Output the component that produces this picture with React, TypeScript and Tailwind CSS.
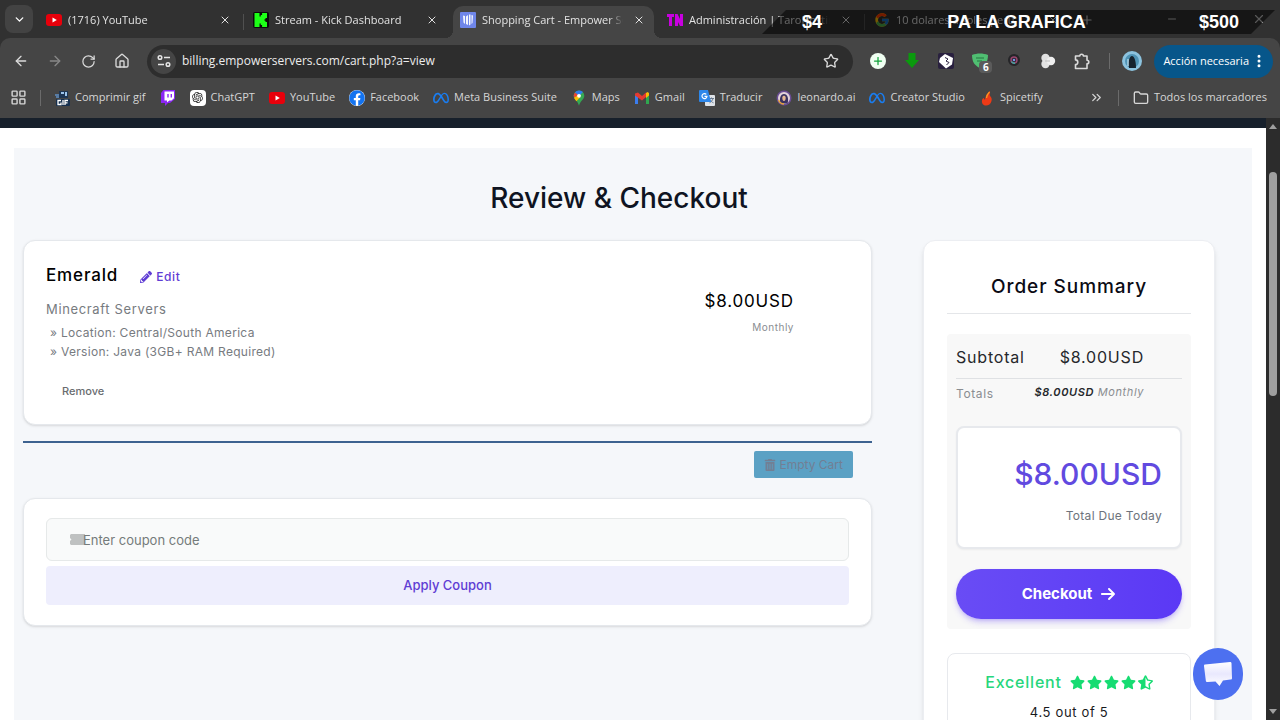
import { type ReactNode } from "react";
import {
  ArrowLeft,
  ArrowRight,
  ChevronDown,
  ChevronsRight,
  EllipsisVertical,
  Folder,
  House,
  LayoutGrid,
  Minus,
  Plus,
  RotateCw,
  Star,
  X,
} from "lucide-react";
import { FaFacebook, FaPencilAlt, FaStar, FaStarHalfAlt, FaTrashAlt } from "react-icons/fa";
import { FaArrowRight, FaMeta } from "react-icons/fa6";
import { FcGoogle } from "react-icons/fc";
import { RiOpenaiFill } from "react-icons/ri";

/* ===== Favicons ===== */

function YouTubeIcon() {
  return (
    <svg viewBox="0 0 16 16" className="size-4 shrink-0">
      <rect x="0" y="2" width="16" height="12" rx="3" fill="#e8000b" />
      <path d="M6.5 5.5v5L10.8 8z" fill="#fff" />
    </svg>
  );
}

function KickIcon() {
  return (
    <svg viewBox="0 0 16 16" className="size-4 shrink-0">
      <rect width="16" height="16" rx="2" fill="#0b0b0b" />
      <path d="M1.500 1h5v3.500h1.300V3h1.300V1H14v5h-1.500v1.300h-1v1.400h1V10H14v5H9.100v-2H7.800v-1.500H6.500V15h-5z" fill="#1dff17" />
    </svg>
  );
}

function EmpowerIcon() {
  return (
    <svg viewBox="0 0 16 16" className="size-4 shrink-0">
      <rect width="16" height="16" rx="1" fill="#6f86ea" />
      <path d="M3 3.500 5 4v8l-1.500-1.500zM6 4.500 8 3v10l-2-1zM9 2.500h1.500v10L9 13.500zM11.500 3l1.500.5L12.500 11l-1 1z" fill="#f3f6ff" />
    </svg>
  );
}

function TaroIcon() {
  return (
    <svg viewBox="0 0 16 16" className="size-4 shrink-0">
      <path d="M0 2h7v3H5v9H2V5H0zM8 2h2.500L13 7V2h3v12h-3l-2-4v4H8z" fill="#c800e0" />
    </svg>
  );
}

function GifIcon() {
  return (
    <svg viewBox="0 0 16 16" className="size-4 shrink-0">
      <path d="M5 1h9v7H5z" fill="#1d3553" />
      <path d="M7 2h3v2H7zM11 2h2v4h-2z" fill="#9cc3ea" />
      <path d="M1 5h4M2 7h3" stroke="#5f8fc4" strokeWidth="1.500" />
      <rect x="2" y="9" width="14" height="7" rx="1" fill="#16304f" />
      <path d="M7 10.500H4v4h3v-2M9 10v5M14 10.500h-3V15M11 12.800h2.500" stroke="#fff" strokeWidth="1.300" fill="none" />
    </svg>
  );
}

function TwitchIcon() {
  return (
    <svg viewBox="0 0 16 16" className="size-4 shrink-0">
      <path d="M3.500 0H15v9l-5 4H8l-3 3v-3H1V3z" fill="#8b25f5" />
      <path d="M4.500 1.500H14v6.700l-2.500 2.300H9.300L7 12.500v-2H4.500z" fill="#fff" />
      <path d="M8 4v3.500M11.300 4v3.500" stroke="#8b25f5" strokeWidth="1.400" />
    </svg>
  );
}

function MapsIcon() {
  return (
    <svg viewBox="0 0 16 16" className="size-4 shrink-0">
      <path d="M8 .5a5.300 5.300 0 0 1 5.300 5.300c0 3.600-4 5-5.300 10-1.300-5-5.300-6.400-5.300-10A5.300 5.300 0 0 1 8 .5z" fill="#35a853" />
      <path d="M8 .5a5.300 5.300 0 0 0-4.100 2L8 6l4-4A5.300 5.300 0 0 0 8 .5z" fill="#2f7df0" />
      <path d="M3.900 2.500A5.300 5.300 0 0 0 3 7.700L7.500 5.300z" fill="#e94335" />
      <path d="M3 7.700c.5 1.200 1.500 2.200 2.400 3.500L9.500 7 7 5.300z" fill="#fbbc04" />
      <circle cx="8" cy="5.800" r="1.900" fill="#fff" />
    </svg>
  );
}

function GmailIcon() {
  return (
    <svg viewBox="0 0 16 16" className="size-4 shrink-0">
      <path d="M1 4v10h3V7z" fill="#3b7ded" />
      <path d="M15 4v10h-3V7z" fill="#2fa84f" />
      <path d="M1 3.500 4 2.500l4 3.500 4-3.500v4.500L8 10.500 1 5.500z" fill="#e53a30" />
      <path d="M12 3l1.500-1L15 3v2.500L12 8z" fill="#fbbc04" />
    </svg>
  );
}

function TranslateIcon() {
  return (
    <svg viewBox="0 0 16 16" className="size-4 shrink-0">
      <rect x="6" y="5" width="10" height="11" rx="1" fill="#dfe3e8" />
      <path d="M10 8.500h5M12.500 7.500v1M14 8.500c-.5 2-2 3.500-3.500 4.300M11 9.500c.7 1.600 2 2.800 3.500 3.300" stroke="#69798c" fill="none" />
      <path d="M1 0h8l3 12H1a1 1 0 0 1-1-1V1a1 1 0 0 1 1-1z" fill="#2d87ea" />
      <path d="M7.300 4.300A2.500 2.500 0 1 0 8 6.300H5.500" stroke="#fff" strokeWidth="1.200" fill="none" />
    </svg>
  );
}

function LeonardoIcon() {
  return (
    <svg viewBox="0 0 16 16" className="size-4 shrink-0">
      <circle cx="8" cy="8" r="7.500" fill="#6b4d95" />
      <circle cx="8" cy="8" r="6" fill="#e3d3da" />
      <path d="M4.500 13.500c-1.500-4.500 0-9.500 3.500-9.500s5 5 3.500 9.500z" fill="#3a3260" />
      <path d="M6.300 7.500c0-2.300 3.400-2.300 3.400 0s-.5 3.500-1.700 3.500-1.700-1.200-1.700-3.500z" fill="#e6b893" />
      <path d="M2.500 10c1 2.500 3 4 5.500 4" stroke="#e5a23c" strokeWidth="1.500" fill="none" />
    </svg>
  );
}

function SpicetifyIcon() {
  return (
    <svg viewBox="0 0 16 16" className="size-4 shrink-0">
      <path d="M11 1c.5 2-1 3 0 5 1.500 1 2 3 1.500 5-.7 3-3 4.500-5.500 4.500S2.500 13.500 3 10.500c.2-1.500 1-2.500 2-2.500 0 1 .5 1.500 1 1.500C6.500 6 8 3 11 1z" fill="#ee3a16" />
      <path d="M10.500 2C8.500 4 7.500 6 7.500 8" stroke="#f59a23" strokeWidth="1.200" fill="none" />
    </svg>
  );
}

/* ===== Browser chrome ===== */

const tabs: { title: string; icon: ReactNode; active?: boolean; divider?: boolean }[] = [
  { title: "(1716) YouTube", icon: <YouTubeIcon />, divider: true },
  { title: "Stream - Kick Dashboard", icon: <KickIcon /> },
  { title: "Shopping Cart - Empower Servers", icon: <EmpowerIcon />, active: true },
  { title: "Administración | TaroHosting", icon: <TaroIcon />, divider: true },
  { title: "10 dolares a soles peru", icon: <FcGoogle className="size-4 shrink-0" /> },
];

const bookmarks: { label: string; icon: ReactNode }[] = [
  { label: "Comprimir gif", icon: <GifIcon /> },
  { label: "", icon: <TwitchIcon /> },
  {
    label: "ChatGPT",
    icon: (
      <span className="flex size-4 shrink-0 items-center justify-center rounded-sm bg-white text-[#222]">
        <RiOpenaiFill size={13} />
      </span>
    ),
  },
  { label: "YouTube", icon: <YouTubeIcon /> },
  {
    label: "Facebook",
    icon: (
      <span className="flex size-4 shrink-0 rounded-full bg-white">
        <FaFacebook size={16} color="#1373f0" />
      </span>
    ),
  },
  { label: "Meta Business Suite", icon: <FaMeta size={16} color="#1a7df0" className="shrink-0" /> },
  { label: "Maps", icon: <MapsIcon /> },
  { label: "Gmail", icon: <GmailIcon /> },
  { label: "Traducir", icon: <TranslateIcon /> },
  { label: "leonardo.ai", icon: <LeonardoIcon /> },
  { label: "Creator Studio", icon: <FaMeta size={16} color="#1a7df0" className="shrink-0" /> },
  { label: "Spicetify", icon: <SpicetifyIcon /> },
];

/** Raised background of the selected tab, with the flared feet */
function ActiveTabShape() {
  return (
    <>
      <span className="absolute inset-y-0 right-1 left-[2px] rounded-t-[10px] bg-[#454545]" />
      <span className="absolute bottom-0 -left-[6px] size-2 bg-[radial-gradient(circle_at_0_0,transparent_8px,#454545_8px)]" />
      <span className="absolute -right-1 bottom-0 size-2 bg-[radial-gradient(circle_at_100%_0,transparent_8px,#454545_8px)]" />
    </>
  );
}

function TabStrip() {
  return (
    <div className="relative flex h-[38px] items-end bg-[#313131] pl-[5px]">
      <button type="button" aria-label="Buscar pestañas" className="mb-[5px] flex size-7 shrink-0 items-center justify-center rounded-lg bg-[#434343] text-white">
        <ChevronDown size={13} strokeWidth={2.5} />
      </button>
      <div role="tablist" className="ml-1 flex min-w-0 flex-1">
        {tabs.map((tab) => (
          <div key={tab.title} className="relative flex h-8 min-w-0 max-w-[207px] flex-1 items-center px-[9px]">
            {tab.active && <ActiveTabShape />}
            <div className="relative flex min-w-0 flex-1 items-center pb-1">
              {tab.icon}
              <button
                type="button"
                role="tab"
                aria-selected={!!tab.active}
                className="ml-[6px] h-5 min-w-0 flex-1 overflow-hidden mask-r-from-90% text-left text-[11px] whitespace-nowrap text-[#e2e2e2]"
              >
                {tab.title}
              </button>
              <button type="button" aria-label="Cerrar pestaña" className="mr-[2px] ml-2 flex size-4 shrink-0 items-center justify-center text-[#e2e2e2]">
                <X size={12} />
              </button>
            </div>
            {tab.divider && <span className="absolute top-2 right-0 h-4 w-px bg-[#505050]" />}
          </div>
        ))}
        <button type="button" aria-label="Nueva pestaña" className="mb-1 ml-2 text-[#d0d0d0]">
          <Plus size={14} />
        </button>
      </div>
      <div className="flex h-full items-center gap-[74px] pr-[14px] text-[#c4c4c4]">
        <Minus size={12} />
        <X size={14} />
      </div>
      {/* donation goal ribbon, drawn over the tabs */}
      <div className="absolute top-[10px] right-[5px] left-[762px] flex h-6 items-center justify-between bg-black/55 pr-9 pl-10 font-['Liberation_Sans',Arial,sans-serif] text-lg leading-6 font-bold text-white [clip-path:polygon(24px_0,100%_0,calc(100%-24px)_100%,0_100%)]">
        <span>$4</span>
        <span className="pl-3">PA LA GRAFICA</span>
        <span>$500</span>
      </div>
    </div>
  );
}

function Extensions() {
  return (
    <div className="flex shrink-0 items-center gap-[18px] text-[#dadada]">
      <button type="button" aria-label="Añadir" className="flex size-4 items-center justify-center rounded-full bg-[#f0fff2] text-[#12a33b]">
        <Plus size={12} strokeWidth={2.5} />
      </button>
      <button type="button" aria-label="Descargar">
        <svg viewBox="0 0 16 16" className="size-4">
          <path d="M4.500 0h7v7H15l-7 8-7-8h3.500z" fill="#0a9a0d" />
        </svg>
      </button>
      <button type="button" aria-label="Extensión">
        <svg viewBox="0 0 16 16" className="size-4">
          <rect width="16" height="16" rx="2" fill="#29203f" />
          <path d="M7 1 15 5l-1 6.500L8 15.500 1 9l1-4z" fill="#fff" />
          <path d="m7 4.500 3 1.500-2 2 3 1.500L8.500 12" stroke="#29203f" fill="none" />
        </svg>
      </button>
      <button type="button" aria-label="Escudo, 6" className="relative">
        <svg viewBox="0 0 16 16" className="size-4">
          <path d="M0 2c5-2 11-2 16 0 0 7-3 11-8 13C3 13 0 9 0 2z" fill="#50bf72" />
          <path d="M4 5h8M5 8h5" stroke="#338e51" strokeWidth="1.500" />
        </svg>
        <span className="absolute top-2 left-[7px] flex h-3 w-[13px] items-center justify-center rounded-sm bg-[#5b5b5b] text-[10px] font-bold text-white">6</span>
      </button>
      <button type="button" aria-label="Cámara">
        <svg viewBox="0 0 16 16" className="size-4">
          <circle cx="8" cy="7" r="6" fill="#252528" />
          <circle cx="8" cy="7" r="3" fill="none" stroke="#9a4670" strokeWidth="1.500" />
          <path d="M5.500 8.500A3 3 0 0 0 9 10" stroke="#3aa9a0" strokeWidth="1.500" fill="none" />
          <circle cx="8" cy="7" r="1.300" fill="#7792e8" />
        </svg>
      </button>
      <button type="button" aria-label="Extensión">
        <svg viewBox="0 0 16 16" className="size-4">
          <circle cx="5.500" cy="5" r="4.200" fill="#e2e2e2" />
          <circle cx="5.500" cy="11" r="4.200" fill="#e2e2e2" />
          <circle cx="11" cy="8" r="4.200" fill="#efefef" />
          <path d="M3 5h4v6H3z" fill="#e2e2e2" />
          <path d="M5 8h5" stroke="#bbb" />
        </svg>
      </button>
      <button type="button" aria-label="Extensiones">
        <svg viewBox="0 0 17 17" className="size-[17px]" fill="none" stroke="#dadada" strokeWidth="1.600" strokeLinejoin="round">
          <path d="M1.500 3h4.300a1.800 1.800 0 0 1 3.600 0H13v4.200a1.800 1.800 0 0 1 0 3.600V15.500H1.500v-4a2.300 2.300 0 0 0 0-4.600z" />
        </svg>
      </button>
      <span className="-mr-[2px] h-4 w-px bg-[#6b6b6b]" />
      <button type="button" aria-label="Perfil" className="-ml-1">
        <svg viewBox="0 0 20 20" className="size-5">
          <circle cx="10" cy="10" r="10" fill="#8cc3df" />
          <circle cx="10" cy="10" r="7" fill="#4f93b5" />
          <path d="M7 17c-1-5 0-12 3-12 2 0 4 4 4 12z" fill="#16232e" />
          <path d="M6 8v7" stroke="#dceef7" />
        </svg>
      </button>
    </div>
  );
}

function Toolbar() {
  return (
    <div className="bg-[#313131]">
      <div className="flex h-[46px] items-center rounded-t-[10px] bg-[#454545] pr-[7px] pl-[13px] text-[#dadada]">
        <div className="flex shrink-0 items-center gap-[18px]">
          <button type="button" aria-label="Atrás"><ArrowLeft size={16} /></button>
          <button type="button" aria-label="Adelante" className="text-[#888]"><ArrowRight size={16} /></button>
          <button type="button" aria-label="Recargar"><RotateCw size={15} /></button>
          <button type="button" aria-label="Inicio"><House size={16} /></button>
        </div>
        <div className="ml-[17px] flex h-[33px] min-w-0 flex-1 items-center rounded-full bg-[#2d2d2d] pr-[14px] pl-1">
          <button type="button" aria-label="Información del sitio" className="flex size-[25px] shrink-0 items-center justify-center rounded-full bg-[#454545]">
            <svg viewBox="0 0 16 16" className="size-4" fill="none" stroke="#e6e6e6" strokeWidth="1.500">
              <circle cx="4" cy="4.500" r="1.800" />
              <path d="M8 4.500h6M2 11.500h6" />
              <circle cx="12" cy="11.500" r="1.800" />
            </svg>
          </button>
          <input
            aria-label="Dirección"
            readOnly
            defaultValue="billing.empowerservers.com/cart.php?a=view"
            className="ml-[6px] min-w-0 flex-1 bg-transparent text-xs text-[#ececec] outline-none"
          />
          <button type="button" aria-label="Añadir a marcadores"><Star size={16} /></button>
        </div>
        <div className="ml-[17px]">
          <Extensions />
        </div>
        <button type="button" className="ml-3 flex h-[33px] shrink-0 items-center gap-[2px] rounded-full bg-[#07568a] pr-[6px] pl-[9px] text-[11px] text-white">
          Acción necesaria
          <EllipsisVertical size={16} strokeWidth={2.5} />
        </button>
      </div>
    </div>
  );
}

function BookmarksBar() {
  return (
    <div className="flex h-[34px] items-center bg-[#454545] pr-[13px] pb-[7px] pl-[10px] text-[11px] text-[#d6d6d6]">
      <button type="button" aria-label="Grupos de pestañas"><LayoutGrid size={17} /></button>
      <span className="mx-[13px] h-4 w-px bg-[#6b6b6b]" />
      <nav className="flex min-w-0 flex-1 items-center gap-[14px] overflow-hidden">
        {bookmarks.map((item, i) => (
          <a key={i} href="#" aria-label={item.label || "Twitch"} className="flex shrink-0 items-center gap-[5px] whitespace-nowrap">
            {item.icon}
            {item.label}
          </a>
        ))}
      </nav>
      <button type="button" aria-label="Más marcadores"><ChevronsRight size={15} /></button>
      <span className="mx-[14px] h-4 w-px bg-[#6b6b6b]" />
      <button type="button" className="flex shrink-0 items-center gap-[5px] whitespace-nowrap">
        <Folder size={16} />
        Todos los marcadores
      </button>
    </div>
  );
}

/* ===== Cart page ===== */

function CartItem() {
  return (
    <section className="flex h-[185px] items-start justify-between rounded-xl border border-[#e5e8ec] bg-white pt-[22px] pr-[77px] pl-[22px] shadow-sm">
      <div>
        <div className="flex items-center gap-[22px]">
          <h2 className="text-[17px] leading-6 font-medium tracking-wider text-black">Emerald</h2>
          <a href="#" className="flex items-center gap-1 pt-1 text-xs font-medium tracking-wider text-[#5f3dd4]">
            <FaPencilAlt size={12} />
            Edit
          </a>
        </div>
        <p className="mt-3 text-[13px] leading-5 tracking-wider text-[#777b7f]">Minecraft Servers</p>
        <ul className="mt-1 pl-1 text-xs leading-[19px] tracking-wide text-[#777b7f]">
          <li>» Location: Central/South America</li>
          <li>» Version: Java (3GB+ RAM Required)</li>
        </ul>
        <button type="button" className="mt-5 ml-4 text-[11px] leading-5 font-medium text-[#686c70]">Remove</button>
      </div>
      <div className="pt-[26px] text-right">
        <p className="text-[17px] leading-6 tracking-wider text-black">$8.00USD</p>
        <p className="mt-[6px] text-[10px] leading-4 tracking-wider text-[#8a8d91]">Monthly</p>
      </div>
    </section>
  );
}

function CouponForm() {
  return (
    <form className="flex flex-col gap-[5px] rounded-xl border border-[#e5e8ec] bg-white px-[22px] pt-[19px] pb-5 shadow-sm" onSubmit={(e) => e.preventDefault()}>
      <div className="relative rounded-md bg-[#f9fafa]">
        <label htmlFor="coupon" className="sr-only">Coupon code</label>
        <svg viewBox="0 0 15 11" className="absolute top-4 left-6 h-[11px] w-[15px]">
          <path d="M1 0h14v11H1L0 10V7l1.500-1.500L0 4V1z" fill="#bfc1c1" />
        </svg>
        <input
          id="coupon"
          placeholder="Enter coupon code"
          className="relative block h-[43px] w-full rounded-md border border-[#e6e9e9] bg-transparent pl-9 text-[13px] text-[#555] outline-none placeholder:text-[#757b7b]"
        />
      </div>
      <button type="submit" className="h-[39px] rounded-sm bg-[#eeeefd] text-[13px] font-medium text-[#5f3dd4]">
        Apply Coupon
      </button>
    </form>
  );
}

function OrderSummary() {
  return (
    <aside className="w-[292px] shrink-0 rounded-xl border border-[#eceef2] bg-white px-[23px] pt-8 shadow-md">
      <h2 className="border-b border-[#e4e6e9] pb-3 text-center text-[19px] leading-7 font-medium tracking-wider text-[#0b0b14]">Order Summary</h2>
      <div className="mt-5 rounded-sm bg-[#f8f8f8] px-[9px] pt-[9px] pb-[10px]">
        <div className="flex justify-between border-b border-[#dfe1e4] pr-[38px] pb-[7px] text-base leading-7 tracking-wider text-[#26282c]">
          <span>Subtotal</span>
          <span>$8.00USD</span>
        </div>
        <div className="flex justify-between pt-[3px] pr-[38px] text-xs leading-5 tracking-wider text-[#8a8d91]">
          <span className="pt-[2px]">Totals</span>
          <span className="text-[11px] italic">
            <b className="font-semibold text-[#26282c]">$8.00USD</b> Monthly
          </span>
        </div>
        <div className="mt-[22px] rounded-lg border-2 border-[#e7e9ed] bg-white pt-6 pr-[18px] pb-[21px] text-right shadow-xs">
          <p className="text-3xl leading-[44px] font-medium text-[#614ae0]">$8.00USD</p>
          <p className="mt-[10px] text-xs leading-5 tracking-wide text-[#6d737c]">Total Due Today</p>
        </div>
        <button type="button" className="mt-5 flex h-[50px] w-full items-center justify-center gap-2 rounded-full bg-linear-to-r from-[#694cf5] to-[#5b38f5] text-[15px] font-bold text-white shadow-md shadow-[#694cf5]/30">
          Checkout
          <FaArrowRight size={16} />
        </button>
      </div>
      <div className="mt-6 rounded-lg border border-[#e7e9ed] pt-4 pb-10 text-center">
        <div className="flex items-center justify-center gap-2">
          <span className="text-base leading-6 font-medium tracking-wider text-[#27d67c]">Excellent</span>
          <span className="flex gap-[2px] text-[#16dc72]">
            <FaStar size={15} />
            <FaStar size={15} />
            <FaStar size={15} />
            <FaStar size={15} />
            <FaStarHalfAlt size={15} />
          </span>
        </div>
        <p className="mt-2 text-[13px] leading-5 tracking-wider text-[#18191c]">4.5 out of 5</p>
      </div>
    </aside>
  );
}

function Scrollbar() {
  return (
    <div className="flex w-[14px] shrink-0 flex-col items-center bg-[#2c2c2c] py-[6px]">
      <span className="border-x-4 border-b-[5px] border-x-transparent border-b-[#9f9f9f]" />
      <span className="mt-[43px] h-56 w-2 rounded-full bg-[#9f9f9f]" />
      <span className="mt-auto border-x-4 border-t-[5px] border-x-transparent border-t-[#9f9f9f]" />
    </div>
  );
}

export default function App() {
  return (
    <div className="flex h-screen flex-col overflow-hidden bg-white font-['Open_Sans','Noto_Sans',sans-serif]">
      <header className="shrink-0">
        <TabStrip />
        <Toolbar />
        <BookmarksBar />
      </header>
      <div className="flex min-h-0 flex-1">
        <div className="flex min-w-0 flex-1 flex-col overflow-hidden border-t-10 border-[#17202b] font-[Inter,sans-serif]">
          <main className="mx-[14px] mt-5 flex-1 bg-[#f5f7fa] pt-[30px] pr-[37px] pl-[9px]">
            <h1 className="text-center text-[28px] leading-10 font-medium text-[#0f1422]">Review &amp; Checkout</h1>
            <div className="mt-[22px] flex items-start gap-[51px]">
              <div className="min-w-0 flex-1">
                <CartItem />
                <div className="mt-4 flex justify-end border-t-2 border-[#3d6290] pt-2 pr-[19px] pb-5">
                  <button type="button" className="flex h-[27px] items-center gap-1 rounded-xs bg-[#5ba1c4] px-[10px] text-xs text-[#727f94]">
                    <FaTrashAlt size={12} />
                    Empty Cart
                  </button>
                </div>
                <CouponForm />
              </div>
              <OrderSummary />
            </div>
          </main>
        </div>
        <Scrollbar />
      </div>
      {/* chat launcher */}
      <button type="button" aria-label="Chat" className="fixed right-[37px] bottom-5 flex h-[52px] w-[50px] items-center justify-center rounded-full bg-[#4d70f0]">
        <svg viewBox="0 0 30 26" className="h-[26px] w-[30px]">
          <defs>
            <linearGradient id="bubble" x1="0" y1="0" x2="0" y2="1">
              <stop offset="0" stopColor="#fff" />
              <stop offset=".5" stopColor="#e9e8fd" />
              <stop offset="1" stopColor="#fff" />
            </linearGradient>
          </defs>
          <path d="M2 3.500 27 1c1 0 1.500.5 1.500 1.500L29 17c0 1-.5 1.500-1.500 1.600L20 19.500l-3.500 5.500-4-4.600-8 .6c-1 0-1.600-.5-1.700-1.500L1 5c0-1 .3-1.500 1-1.500z" fill="url(#bubble)" />
        </svg>
      </button>
    </div>
  );
}
